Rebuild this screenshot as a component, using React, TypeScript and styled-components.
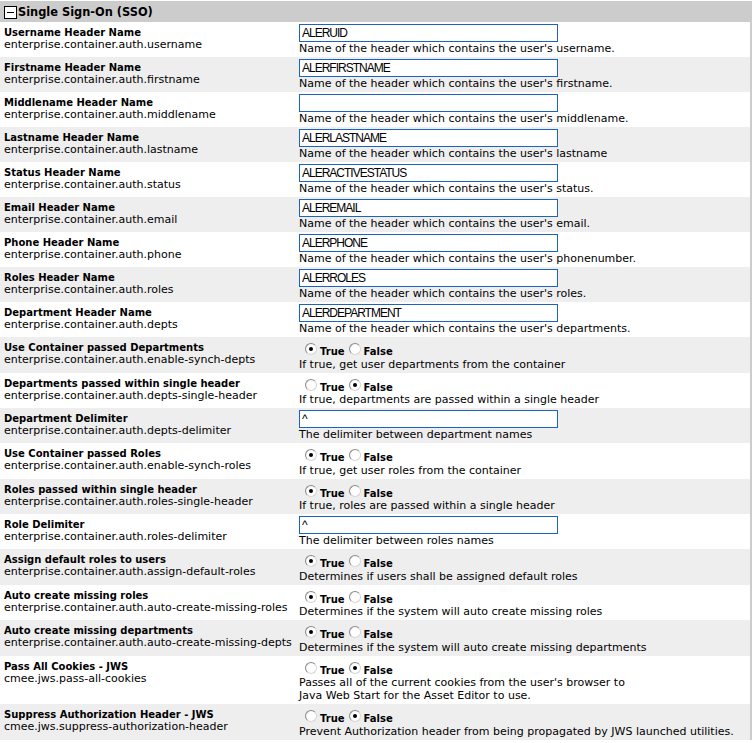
import React from "react";
import styled, { createGlobalStyle } from "styled-components";

const GlobalStyle = createGlobalStyle`
  html, body {
    margin: 0;
    padding: 0;
    background: #fff;
  }
  body {
    font-family: "DejaVu Sans", Verdana, sans-serif;
    font-size: 11px;
    color: #000;
  }
`;

const Panel = styled.div`
  width: 752px;
  padding-top: 1px;
`;

const SectionHeader = styled.div`
  display: flex;
  align-items: center;
  height: 21px;
  padding-left: 4px;
  background: #cccccc;
  font-size: 11.4px;
  font-weight: bold;
`;

const ToggleIcon = styled.svg`
  width: 13px;
  height: 13px;
  margin: 1px 1px 0 0;
  flex-shrink: 0;
`;

const Rows = styled.div`
  border-right: 2px solid #cccccc;
`;

const Row = styled.div<{ $alt: boolean }>`
  display: grid;
  grid-template-columns: 295px 1fr;
  background: ${({ $alt }) => ($alt ? "#eeeeee" : "#ffffff")};
`;

const LabelCell = styled.div`
  padding: 5px 4px 2px 4px;
  line-height: 12px;
  white-space: nowrap;
`;

const Title = styled.div`
  font-weight: bold;
  font-size: 10px;
`;

const Key = styled.div`
  font-size: 11px;
`;

const ValueCell = styled.div`
  padding: 2px 4px 2px 4px;
`;

const TextInput = styled.input`
  display: block;
  box-sizing: border-box;
  width: 259px;
  height: 18px;
  margin: 0;
  padding: 0 2px;
  border: 1px solid #1d63bd;
  background: #fff;
  font-family: "Liberation Sans", Arial, sans-serif;
  font-size: 12px;
  letter-spacing: -1px;
  color: #000;
  outline: none;
`;

const Help = styled.div`
  font-size: 11px;
  line-height: 13px;
  white-space: pre-line;
`;

const RadioLine = styled.div`
  display: flex;
  align-items: flex-start;
  height: 18.5px;
  padding-left: 6px;
`;

const RadioDot = styled.span<{ $on: boolean }>`
  position: relative;
  box-sizing: border-box;
  width: 12px;
  height: 12px;
  margin-top: 4px;
  border-radius: 50%;
  border: 1px solid #8a8a8a;
  border-right-color: #d6d6d6;
  border-bottom-color: #d6d6d6;
  background: radial-gradient(circle at 60% 60%, #ffffff 55%, #e4e4e4 100%);
  &::after {
    content: "";
    display: ${({ $on }) => ($on ? "block" : "none")};
    position: absolute;
    left: 3px;
    top: 3px;
    width: 4px;
    height: 4px;
    border-radius: 50%;
    background: #000;
  }
`;

const RadioText = styled.span`
  font-weight: bold;
  font-size: 10px;
  margin: 8px 4px 0 3px;
  line-height: 10px;
`;

type Field =
  | { title: string; key: string; kind: "text"; value: string; help: string }
  | { title: string; key: string; kind: "bool"; value: boolean; help: string };

const fields: Field[] = [
  { title: "Username Header Name", key: "enterprise.container.auth.username", kind: "text", value: "ALERUID", help: "Name of the header which contains the user's username." },
  { title: "Firstname Header Name", key: "enterprise.container.auth.firstname", kind: "text", value: "ALERFIRSTNAME", help: "Name of the header which contains the user's firstname." },
  { title: "Middlename Header Name", key: "enterprise.container.auth.middlename", kind: "text", value: "", help: "Name of the header which contains the user's middlename." },
  { title: "Lastname Header Name", key: "enterprise.container.auth.lastname", kind: "text", value: "ALERLASTNAME", help: "Name of the header which contains the user's lastname" },
  { title: "Status Header Name", key: "enterprise.container.auth.status", kind: "text", value: "ALERACTIVESTATUS", help: "Name of the header which contains the user's status." },
  { title: "Email Header Name", key: "enterprise.container.auth.email", kind: "text", value: "ALEREMAIL", help: "Name of the header which contains the user's email." },
  { title: "Phone Header Name", key: "enterprise.container.auth.phone", kind: "text", value: "ALERPHONE", help: "Name of the header which contains the user's phonenumber." },
  { title: "Roles Header Name", key: "enterprise.container.auth.roles", kind: "text", value: "ALERROLES", help: "Name of the header which contains the user's roles." },
  { title: "Department Header Name", key: "enterprise.container.auth.depts", kind: "text", value: "ALERDEPARTMENT", help: "Name of the header which contains the user's departments." },
  { title: "Use Container passed Departments", key: "enterprise.container.auth.enable-synch-depts", kind: "bool", value: true, help: "If true, get user departments from the container" },
  { title: "Departments passed within single header", key: "enterprise.container.auth.depts-single-header", kind: "bool", value: false, help: "If true, departments are passed within a single header" },
  { title: "Department Delimiter", key: "enterprise.container.auth.depts-delimiter", kind: "text", value: "^", help: "The delimiter between department names" },
  { title: "Use Container passed Roles", key: "enterprise.container.auth.enable-synch-roles", kind: "bool", value: true, help: "If true, get user roles from the container" },
  { title: "Roles passed within single header", key: "enterprise.container.auth.roles-single-header", kind: "bool", value: true, help: "If true, roles are passed within a single header" },
  { title: "Role Delimiter", key: "enterprise.container.auth.roles-delimiter", kind: "text", value: "^", help: "The delimiter between roles names" },
  { title: "Assign default roles to users", key: "enterprise.container.auth.assign-default-roles", kind: "bool", value: true, help: "Determines if users shall be assigned default roles" },
  { title: "Auto create missing roles", key: "enterprise.container.auth.auto-create-missing-roles", kind: "bool", value: true, help: "Determines if the system will auto create missing roles" },
  { title: "Auto create missing departments", key: "enterprise.container.auth.auto-create-missing-depts", kind: "bool", value: true, help: "Determines if the system will auto create missing departments" },
  { title: "Pass All Cookies - JWS", key: "cmee.jws.pass-all-cookies", kind: "bool", value: false, help: "Passes all of the current cookies from the user's browser to\nJava Web Start for the Asset Editor to use." },
  { title: "Suppress Authorization Header - JWS", key: "cmee.jws.suppress-authorization-header", kind: "bool", value: false, help: "Prevent Authorization header from being propagated by JWS launched utilities." },
];

function BoolChoice({ value }: { value: boolean }) {
  return (
    <RadioLine>
      <RadioDot $on={value} />
      <RadioText>True</RadioText>
      <RadioDot $on={!value} />
      <RadioText>False</RadioText>
    </RadioLine>
  );
}

export default function App() {
  return (
    <>
      <GlobalStyle />
      <Panel>
        <SectionHeader>
          <ToggleIcon viewBox="0 0 13 13">
            <rect x="0.5" y="0.5" width="12" height="12" fill="#fff" stroke="#000" />
            <rect x="3" y="6" width="7" height="1" fill="#000" />
          </ToggleIcon>
          Single Sign-On (SSO)
        </SectionHeader>
        <Rows>
          {fields.map((f, i) => (
            <Row key={f.key} $alt={i % 2 === 1}>
              <LabelCell>
                <Title>{f.title}</Title>
                <Key>{f.key}</Key>
              </LabelCell>
              <ValueCell>
                {f.kind === "text" ? (
                  <TextInput defaultValue={f.value} />
                ) : (
                  <BoolChoice value={f.value} />
                )}
                <Help>{f.help}</Help>
              </ValueCell>
            </Row>
          ))}
        </Rows>
      </Panel>
    </>
  );
}
